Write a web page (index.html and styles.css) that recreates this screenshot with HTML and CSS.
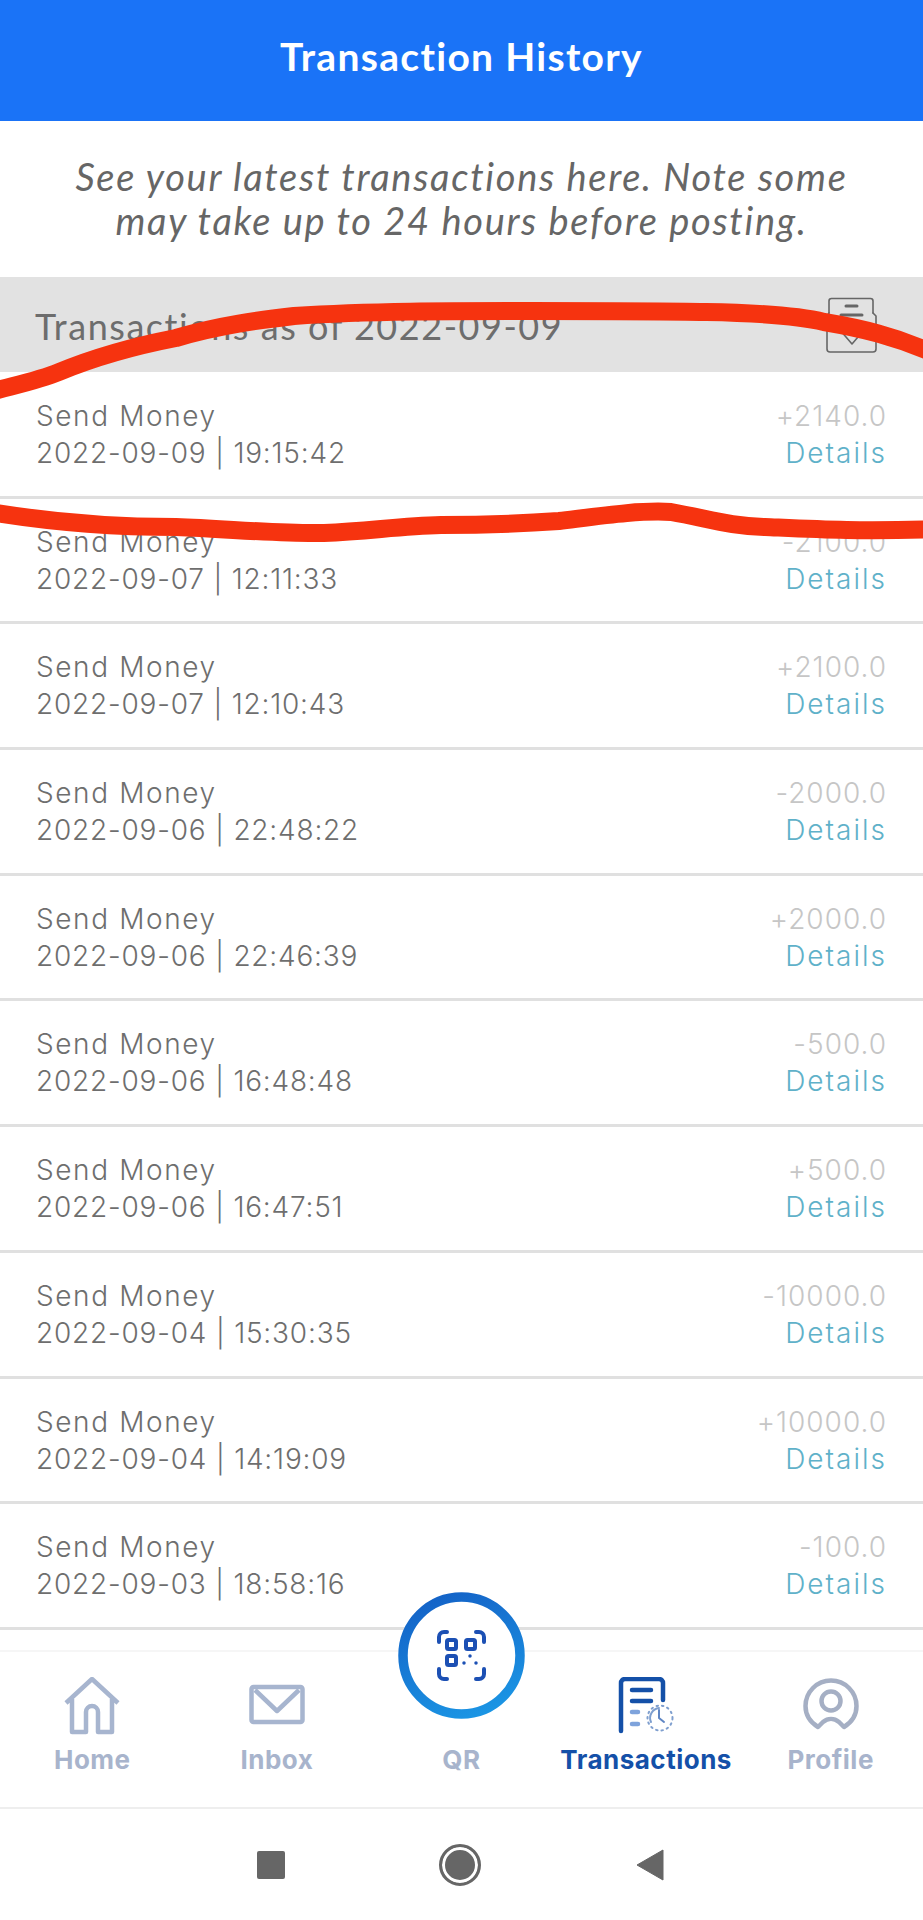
FILE: index.html
```html
<!DOCTYPE html>
<html lang="en">
<head>
<meta charset="utf-8">
<title>Transaction History</title>
<link rel="stylesheet" href="styles.css">
</head>
<body>
<div class="page">
  <header class="topbar"><h1 class="title">Transaction History</h1></header>
  <p class="intro">See your latest transactions here. Note some<br>may take up to 24 hours before posting.</p>
  <div class="asof">
    <span class="asof-text">Transactions as of 2022-09-09</span>
    <svg class="asof-icon" width="54" height="58" viewBox="0 0 54 58" fill="none" stroke="#666" stroke-width="1.6" stroke-linejoin="round" stroke-linecap="round">
      <path d="M4 16V4a2.500 2.500 0 0 1 2.500-2.500h39A2.500 2.500 0 0 1 48 4v12"/>
      <path d="M48 16l3 3v33a3 3 0 0 1-3 3H5a3 3 0 0 1-3-3V19l2-3"/>
      <path d="M15 33l12 14 12-14"/>
      <path d="M21 9h11M16 18h21" stroke-width="3"/>
    </svg>
  </div>
  <ul class="list">
    <li class="row"><div class="row-left"><span class="kind">Send Money</span><span class="when">2022-09-09 | 19:15:42</span></div><div class="row-right"><span class="amount">+2140.0</span><span class="details">Details</span></div></li>
    <li class="row"><div class="row-left"><span class="kind">Send Money</span><span class="when">2022-09-07 | 12:11:33</span></div><div class="row-right"><span class="amount">-2100.0</span><span class="details">Details</span></div></li>
    <li class="row"><div class="row-left"><span class="kind">Send Money</span><span class="when">2022-09-07 | 12:10:43</span></div><div class="row-right"><span class="amount">+2100.0</span><span class="details">Details</span></div></li>
    <li class="row"><div class="row-left"><span class="kind">Send Money</span><span class="when">2022-09-06 | 22:48:22</span></div><div class="row-right"><span class="amount">-2000.0</span><span class="details">Details</span></div></li>
    <li class="row"><div class="row-left"><span class="kind">Send Money</span><span class="when">2022-09-06 | 22:46:39</span></div><div class="row-right"><span class="amount">+2000.0</span><span class="details">Details</span></div></li>
    <li class="row"><div class="row-left"><span class="kind">Send Money</span><span class="when">2022-09-06 | 16:48:48</span></div><div class="row-right"><span class="amount">-500.0</span><span class="details">Details</span></div></li>
    <li class="row"><div class="row-left"><span class="kind">Send Money</span><span class="when">2022-09-06 | 16:47:51</span></div><div class="row-right"><span class="amount">+500.0</span><span class="details">Details</span></div></li>
    <li class="row"><div class="row-left"><span class="kind">Send Money</span><span class="when">2022-09-04 | 15:30:35</span></div><div class="row-right"><span class="amount">-10000.0</span><span class="details">Details</span></div></li>
    <li class="row"><div class="row-left"><span class="kind">Send Money</span><span class="when">2022-09-04 | 14:19:09</span></div><div class="row-right"><span class="amount">+10000.0</span><span class="details">Details</span></div></li>
    <li class="row"><div class="row-left"><span class="kind">Send Money</span><span class="when">2022-09-03 | 18:58:16</span></div><div class="row-right"><span class="amount">-100.0</span><span class="details">Details</span></div></li>
  </ul>
  <nav class="tabs">
    <div class="tab">
      <svg class="tab-icon" width="56" height="58" viewBox="0 0 56 58" fill="none" stroke="#a7b5cf" stroke-width="4.500" stroke-linejoin="round">
        <path d="M2 26L28 2l26 24M8 22v33h14V35a6 6 0 0 1 12 0v20h14V22"/>
      </svg>
      <span class="tab-label">Home</span>
    </div>
    <div class="tab">
      <svg class="tab-icon" width="56" height="58" viewBox="0 0 56 58" fill="none" stroke="#a7b5cf" stroke-width="4.500" stroke-linejoin="round">
        <rect x="2.500" y="10" width="51" height="35" rx="2"/>
        <path d="M6 13l22 21 22-21"/>
      </svg>
      <span class="tab-label">Inbox</span>
    </div>
    <div class="tab">
      <span class="tab-spacer"></span>
      <svg class="qr" width="127" height="127" viewBox="0 0 127 127" fill="#fff">
        <defs>
          <linearGradient id="ring" x1="0.300" y1="0" x2="0.700" y2="1">
            <stop offset="0" stop-color="#1464c8"/>
            <stop offset="1" stop-color="#1b95e4"/>
          </linearGradient>
        </defs>
        <circle cx="63.500" cy="63.500" r="58.500" stroke="url(#ring)" stroke-width="9.500"/>
        <g fill="none" stroke="#1c50b4" stroke-width="4" stroke-linecap="round" stroke-linejoin="round">
          <path d="M41 50v-5a5 5 0 0 1 5-5h3M78 40h3a5 5 0 0 1 5 5v5M41 77v5a5 5 0 0 0 5 5h3M78 87h3a5 5 0 0 0 5-5v-5"/>
          <rect x="49" y="48" width="9" height="9" rx="1.500"/>
          <rect x="49" y="64" width="9" height="9" rx="1.500"/>
          <rect x="68" y="48" width="9" height="9" rx="1.500"/>
          <path d="M72 64v.1M66 71v.1M78 71v.1" stroke-width="3.500"/>
        </g>
      </svg>
      <span class="tab-label">QR</span>
    </div>
    <div class="tab tab-active">
      <svg class="tab-icon" width="56" height="58" viewBox="0 0 56 58" fill="none" stroke="#1450a8" stroke-linecap="round" stroke-linejoin="round">
        <path d="M3 54V6a4 4 0 0 1 4-4h34a4 4 0 0 1 4 4v17" stroke-width="4.500"/>
        <path d="M14 13h19M14 24h19" stroke-width="4.500"/>
        <path d="M14 35h6M14 47h6" stroke="#7ea3dc" stroke-width="4.500"/>
        <circle cx="42" cy="41" r="12.500" stroke="#7f9fcf" stroke-width="2" stroke-dasharray="1.500 4"/>
        <path d="M33 45a10 10 0 0 1 8-14" stroke="#7f9fcf" stroke-width="2"/>
        <path d="M41 33v8l5 4" stroke="#5f86c4" stroke-width="2"/>
      </svg>
      <span class="tab-label">Transactions</span>
    </div>
    <div class="tab">
      <svg class="tab-icon" width="56" height="58" viewBox="0 0 56 58" fill="none" stroke="#a5afc4" stroke-width="4.500" stroke-linecap="round">
        <path d="M15 50C7 45 2.500 37 2.500 29a25.500 25.500 0 0 1 51 0c0 8-4.500 16-12.500 21l-5-5c-5-4-11-4-16 0z" stroke-linejoin="round"/>
        <circle cx="28" cy="24" r="9.500"/>
      </svg>
      <span class="tab-label">Profile</span>
    </div>
  </nav>
  <div class="sysbar">
    <span class="sys-square"></span>
    <span class="sys-circle"></span>
    <svg class="sys-back" width="28" height="32" viewBox="0 0 28 32"><path d="M27 1v30L1 16z" fill="#666" stroke="#666" stroke-linejoin="round"/></svg>
  </div>
  <svg class="scribble" width="923" height="1920" viewBox="0 0 923 1920" fill="none" stroke="#f6330f" stroke-width="18" stroke-linecap="round" stroke-linejoin="round">
    <path d="M-10 392C20 384 40 380 59 372C100 355 140 345 176 338C220 325 260 320 294 316C370 311 450 311 530 311C600 311 660 311 706 312C760 313 800 316 824 322C860 328 895 336 935 354"/>
    <path d="M-10 512C50 522 110 527 176 527C230 529 280 534 324 533C370 531 400 526 441 525C490 525 530 523 559 521C600 516 640 510 671 512C710 519 730 526 765 527C810 529 860 532 935 529"/>
  </svg>
</div>
</body>
</html>
```
FILE: styles.css
```css
* { box-sizing: border-box; }
html, body { margin: 0; padding: 0; background: #fff; }
.page {
  position: relative;
  width: 923px;
  height: 1920px;
  display: flex;
  flex-direction: column;
  overflow: hidden;
  font-family: "Inter", "Liberation Sans", sans-serif;
}
.topbar {
  height: 121px;
  flex: none;
  background: #1a73f7;
  display: flex;
  align-items: center;
  justify-content: center;
  padding-bottom: 10px;
}
.title {
  margin: 0;
  color: #fff;
  font-family: "Lato", sans-serif;
  font-size: 39px;
  font-weight: 700;
  letter-spacing: 1.3px;
}
.intro {
  margin: 0;
  height: 156px;
  flex: none;
  display: flex;
  align-items: center;
  justify-content: center;
  text-align: center;
  color: #666;
  font-family: "Lato", sans-serif;
  font-style: italic;
  font-size: 38px;
  line-height: 44px;
  letter-spacing: 1.7px;
  padding-bottom: 2px;
}
.asof {
  height: 95px;
  flex: none;
  background: #e2e2e2;
  display: flex;
  align-items: center;
  justify-content: space-between;
  padding: 0 44px 0 35px;
  color: #6d6d6d;
  font-family: "Lato", sans-serif;
  font-size: 36px;
  letter-spacing: 1.55px;
}
.asof-text { position: relative; top: 1px; }
.asof-icon { position: relative; top: 1px; }
.list {
  list-style: none;
  margin: 0;
  padding: 1px 0 0;
  flex: 1;
  min-height: 0;
  overflow: hidden;
}
.row {
  height: 125.7px;
  display: flex;
  justify-content: space-between;
  align-items: flex-start;
  padding: 25px 36px 0 36px;
  border-bottom: 3px solid #e0e0e0;
  color: #6e6e6e;
  font-size: 28px;
  font-weight: 300;
  line-height: 37px;
}
.row-left, .row-right { display: flex; flex-direction: column; }
.row-right { align-items: flex-end; }
.kind { letter-spacing: 1.6px; }
.when { letter-spacing: 0.8px; }
.amount { color: #c6c6c6; letter-spacing: 1px; }
.details { color: #5fb1c9; letter-spacing: 2px; }
.tabs {
  height: 159px;
  flex: none;
  display: grid;
  grid-template-columns: repeat(5, 1fr);
  border-top: 2px solid #f6f6f6;
  border-bottom: 2px solid #eee;
  background: #fff;
}
.tab {
  position: relative;
  display: flex;
  flex-direction: column;
  align-items: center;
  padding-top: 25px;
}
.tab-icon, .tab-spacer { display: block; width: 56px; height: 58px; flex: none; }
.tab-label {
  margin-top: 10px;
  color: #a8b4cc;
  font-size: 26px;
  line-height: 30px;
  font-weight: 700;
  letter-spacing: 0.5px;
  white-space: nowrap;
}
.tab-active .tab-label { color: #1450a8; }
.qr {
  position: absolute;
  top: -60px;
  left: 50%;
  margin-left: -63.5px;
}
.sysbar {
  height: 111px;
  flex: none;
  display: grid;
  grid-template-columns: 1fr 1fr 1fr;
  align-items: center;
  justify-items: center;
  padding: 0 178px 0 176px;
  background: #fff;
}
.sys-square { width: 28px; height: 28px; background: #666; border-radius: 2px; }
.sys-circle {
  width: 42px;
  height: 42px;
  border-radius: 50%;
  background: #666;
  border: 3px solid #666;
  box-shadow: inset 0 0 0 3px #fff;
}
.sys-back { display: block; }
.scribble { position: absolute; top: 0; left: 0; pointer-events: none; }
```
